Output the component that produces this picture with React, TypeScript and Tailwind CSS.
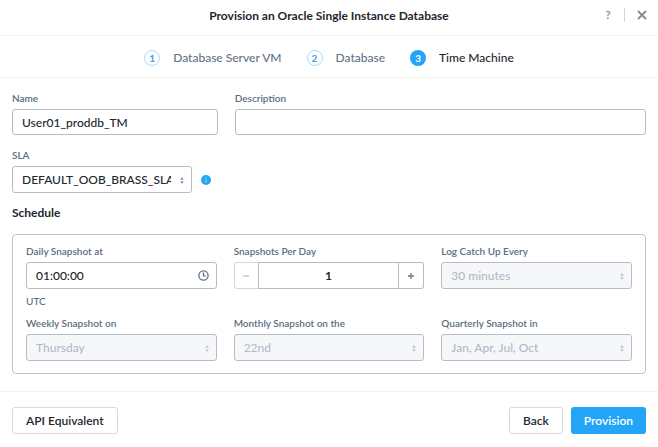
import type { ReactNode } from "react";
import clsx from "clsx";

const controlBase =
  "block w-full rounded-[3px] border border-[#b5bccb] px-[9px] text-xs leading-4 font-medium outline-none focus:border-[#22a5f7]";

function Field({ id, label, className, children }: { id: string; label: string; className?: string; children: ReactNode }) {
  return (
    <div className={clsx("min-w-0", className)}>
      <label htmlFor={id} className="mb-1 block text-[10px] leading-[14px] font-semibold text-[#5c6d80]">
        {label}
      </label>
      {children}
    </div>
  );
}

function Select({ id, value, disabled }: { id: string; value: string; disabled?: boolean }) {
  return (
    <div className="relative">
      <select
        id={id}
        disabled={disabled}
        defaultValue={value}
        className={clsx(
          controlBase,
          "h-[27px] appearance-none pr-5 opacity-100",
          disabled ? "bg-[#f6f7f9] text-[#b2b9c8]" : "bg-white text-[#22272e]",
        )}
      >
        <option>{value}</option>
      </select>
      <svg
        aria-hidden="true"
        viewBox="0 0 4 7"
        className={clsx("pointer-events-none absolute top-[11px] right-2 h-[7px] w-1", disabled ? "text-[#bdc4d0]" : "text-[#8592a6]")}
        fill="currentColor"
      >
        <path d="M2 0 3.8 2.7H.2zM2 7 .2 4.3h3.6z" />
      </svg>
    </div>
  );
}

function Step({ index, label, active }: { index: number; label: string; active?: boolean }) {
  return (
    <li className="flex items-center gap-[13px]" aria-current={active ? "step" : undefined}>
      <span
        className={clsx(
          "flex size-4 items-center justify-center rounded-full text-[10px] leading-none font-bold",
          active ? "bg-[#22a5f7] text-white" : "border border-[#a5dbfb] text-[#3b9bf5]",
        )}
      >
        {index}
      </span>
      <span className={clsx("text-xs leading-4 font-medium", active ? "text-[#22272e]" : "text-[#627386]")}>{label}</span>
    </li>
  );
}

const buttonBase = "h-[27px] rounded-[3px] text-xs leading-4 font-semibold";

export default function App() {
  return (
    <main className="bg-white font-['Lato','Open_Sans',sans-serif] text-[#22272e]">
      <header className="relative flex h-9 items-center justify-center border-b border-[#f0f1f3] pb-1">
        <h1 className="text-xs leading-4 font-bold">Provision an Oracle Single Instance Database</h1>
        <div className="absolute top-1.5 right-[11px] flex items-center">
          <button type="button" aria-label="Help" className="w-4 text-[11px] leading-4 font-bold text-[#8090a2]">
            ?
          </button>
          <span className="ml-2 h-3.5 w-px bg-[#cfd5dd]" />
          <button type="button" aria-label="Close" className="ml-3 py-1 text-[#7b8b9d]">
            <svg viewBox="0 0 10 10" className="size-2.5" fill="none" stroke="currentColor" strokeWidth="1.8">
              <path d="m1 1 8 8M9 1 1 9" />
            </svg>
          </button>
        </div>
      </header>

      <nav aria-label="Steps" className="flex h-[42px] items-center justify-center border-b border-[#f0f1f3]">
        <ol className="flex items-center gap-[25px] pt-0.5">
          <Step index={1} label="Database Server VM" />
          <Step index={2} label="Database" />
          <Step index={3} label="Time Machine" active />
        </ol>
      </nav>

      <form onSubmit={(event) => event.preventDefault()}>
        <div className="px-3 pt-[13px] pb-[17px]">
          <div className="flex gap-[17px]">
            <Field id="name" label="Name" className="flex-1">
              <input id="name" type="text" defaultValue="User01_proddb_TM" className={clsx(controlBase, "h-[26px]")} />
            </Field>
            <Field id="description" label="Description" className="flex-2">
              <input id="description" type="text" className={clsx(controlBase, "h-[26px]")} />
            </Field>
          </div>

          <div className="mt-[13px] flex items-end gap-[9px]">
            <Field id="sla" label="SLA" className="w-[180px]">
              <Select id="sla" value="DEFAULT_OOB_BRASS_SLA" />
            </Field>
            <button type="button" aria-label="About SLA" className="mb-2">
              <svg viewBox="0 0 10 10" className="size-2.5">
                <circle cx="5" cy="5" r="5" fill="#22a5f7" />
                <path d="M5 2.2v1.2M5 4.3v3.2" stroke="#a9dcfc" strokeWidth="1" />
              </svg>
            </button>
          </div>

          <h2 className="mt-3 text-xs leading-4 font-bold">Schedule</h2>

          <div className="mt-[13px] grid grid-cols-3 gap-x-[17px] rounded-[4px] border border-[#bfc3ca] px-[13px] pt-[9px] pb-3">
            <div>
              <Field id="daily" label="Daily Snapshot at">
                <div className="relative">
                  <input id="daily" type="text" defaultValue="01:00:00" className={clsx(controlBase, "h-[27px] pr-8")} />
                  <svg
                    aria-hidden="true"
                    viewBox="0 0 11 11"
                    className="pointer-events-none absolute top-2 right-2 size-[11px] text-[#627386]"
                    fill="none"
                    stroke="currentColor"
                    strokeWidth="1.3"
                  >
                    <circle cx="5.5" cy="5.5" r="4.6" />
                    <path d="M5.5 2.6v3.2h2.1" />
                  </svg>
                </div>
              </Field>
              <p className="mt-1 text-[10px] leading-4 font-medium text-[#5c6d80]">UTC</p>
            </div>
            <Field id="per-day" label="Snapshots Per Day">
              <div className="flex h-[27px]">
                <button
                  type="button"
                  aria-label="Fewer snapshots"
                  className="flex w-6 shrink-0 items-center justify-center rounded-l-[3px] border border-r-0 border-[#d3d8e1] text-[#bdc4d0]"
                >
                  <svg viewBox="0 0 6 6" className="size-1.5" stroke="currentColor" strokeWidth="1.4">
                    <path d="M0 3h6" />
                  </svg>
                </button>
                <input
                  id="per-day"
                  type="text"
                  inputMode="numeric"
                  defaultValue="1"
                  className="min-w-0 flex-1 border border-[#b5bccb] text-center text-xs leading-4 font-bold outline-none"
                />
                <button
                  type="button"
                  aria-label="More snapshots"
                  className="flex w-[25px] shrink-0 items-center justify-center rounded-r-[3px] border border-l-0 border-[#b5bccb] text-[#8592a6]"
                >
                  <svg viewBox="0 0 6 6" className="size-1.5" stroke="currentColor" strokeWidth="1.8">
                    <path d="M0 3h6M3 0v6" />
                  </svg>
                </button>
              </div>
            </Field>
            <Field id="log" label="Log Catch Up Every">
              <Select id="log" value="30 minutes" disabled />
            </Field>
            <Field id="weekly" label="Weekly Snapshot on" className="mt-[7px]">
              <Select id="weekly" value="Thursday" disabled />
            </Field>
            <Field id="monthly" label="Monthly Snapshot on the" className="mt-[7px]">
              <Select id="monthly" value="22nd" disabled />
            </Field>
            <Field id="quarterly" label="Quarterly Snapshot in" className="mt-[7px]">
              <Select id="quarterly" value="Jan, Apr, Jul, Oct" disabled />
            </Field>
          </div>
        </div>

        <footer className="flex gap-2 border-t border-[#f0f1f3] px-3 pt-[15px] pb-[13px]">
          <button type="button" className={clsx(buttonBase, "mr-auto border border-[#d6d9e2] px-[13px]")}>
            API Equivalent
          </button>
          <button type="button" className={clsx(buttonBase, "border border-[#d6d9e2] px-[13px]")}>
            Back
          </button>
          <button type="submit" className={clsx(buttonBase, "bg-[#22a5f7] px-[13px] text-white")}>
            Provision
          </button>
        </footer>
      </form>
    </main>
  );
}
